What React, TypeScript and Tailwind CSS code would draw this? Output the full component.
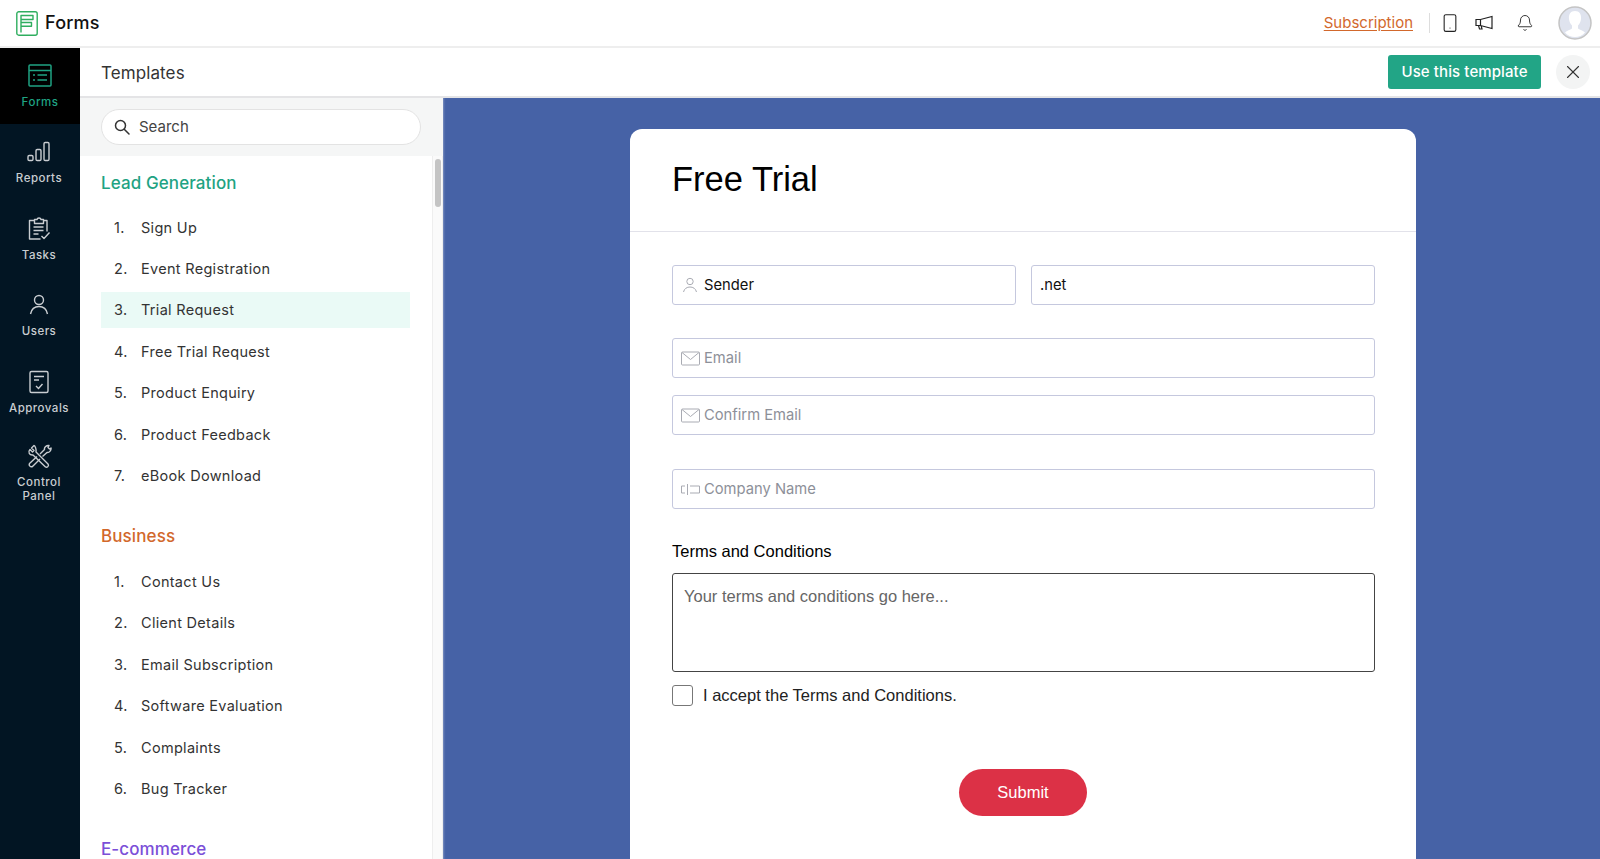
import { X, Smartphone, Bell } from "lucide-react";
import type { ReactNode } from "react";

const sansFont = "font-['Inter','Noto_Sans',sans-serif]";

const FormsIcon = () => (
  <svg width="26" height="26" viewBox="0 0 26 26" fill="none" stroke="currentColor" strokeWidth="1.5">
    <rect x="2" y="2" width="22" height="21" rx="1" />
    <path d="M2 7.500h22M6 12h2M10.500 12H20M6 17h2M10.500 17H20" />
  </svg>
);

const ReportsIcon = () => (
  <svg width="26" height="26" viewBox="0 0 26 26" fill="none" stroke="currentColor" strokeWidth="1.4">
    <rect x="2" y="16.500" width="5" height="5" rx="1.200" />
    <rect x="10" y="10.500" width="5" height="11" rx="1.200" />
    <rect x="18" y="3.500" width="5" height="18" rx="1.200" />
  </svg>
);

const TasksIcon = () => (
  <svg width="26" height="26" viewBox="0 0 26 26" fill="none" stroke="currentColor" strokeWidth="1.4" strokeLinejoin="round">
    <path d="M8.500 4.500H3.500v18.500h11M17.500 4.500h3.500v11" />
    <path d="M8.500 3.500h2.500c.4-2 3.600-2 4 0h2.500v4h-9zM7.500 11h10M7.500 14.500h10M7.500 18h5M15.500 20l2.500 2.500 5.500-6" />
  </svg>
);

const UsersIcon = () => (
  <svg width="26" height="26" viewBox="0 0 26 26" fill="none" stroke="currentColor" strokeWidth="1.4">
    <circle cx="13" cy="8" r="4.500" />
    <path d="M4.500 22c1-5 4.500-7.500 8.500-7.500s7.500 2.500 8.500 7.500" />
  </svg>
);

const ApprovalsIcon = () => (
  <svg width="26" height="26" viewBox="0 0 26 26" fill="none" stroke="currentColor" strokeWidth="1.4">
    <rect x="4" y="2.500" width="18" height="21" rx="1.500" />
    <path d="M8 7.500h10M8 11h5M10 17l2.500 2.500 4-4.500" />
  </svg>
);

const ControlIcon = () => (
  <svg width="26" height="26" viewBox="0 0 26 26" fill="none" stroke="currentColor" strokeWidth="1.4" strokeLinejoin="round">
    <path d="M8 2.500L5.500 5l2.500 2.500-1.500 1.500L4 6.500c-2.500 2.500-.5 6 3 5.500l12.500 12c1.500 1 4-1 2.500-3L10 9c.5-3-1-6.500-2-6.500z" />
    <path d="M11 13.500L3.500 20.500c-1 2 1 4 3 3L14 16M14 11l4.500-4.500c-.5-2 2-4.500 4.500-4l-1 2 1.500 1.500 1.500-1c.5 2.500-2 5-4 4.500L16.500 13.500" />
  </svg>
);

const SearchIcon = () => (
  <svg width="16" height="16" viewBox="0 0 16 16" fill="none" stroke="#333" strokeWidth="1.500" strokeLinecap="round">
    <circle cx="6.500" cy="6.500" r="5" />
    <path d="M10.500 10.500l4.500 4.500" />
  </svg>
);

const MailIcon = () => (
  <svg width="19" height="15" viewBox="0 0 19 15" fill="none" stroke="#a9abb3" strokeWidth="1">
    <rect x="0.500" y="1" width="18" height="13" rx="1" />
    <path d="M1 1.500l8.500 7 8.500-7" />
  </svg>
);

const PersonIcon = () => (
  <svg width="16" height="16" viewBox="0 0 16 16" fill="none" stroke="#a9abb3" strokeWidth="1">
    <circle cx="8" cy="4.500" r="3.200" />
    <path d="M1.500 15c.8-3.500 3.500-5 6.500-5s5.700 1.500 6.500 5" />
  </svg>
);

const CompanyIcon = () => (
  <svg width="19" height="11" viewBox="0 0 19 11" fill="none" stroke="#a9abb3" strokeWidth="1">
    <path d="M4 2H.500v7H4M6.500 0v11M9 2h9.500v7H9" />
  </svg>
);

const Megaphone = () => (
  <svg width="18" height="16" viewBox="0 0 18 16" fill="none" stroke="#222" strokeWidth="1.200">
    <path d="M1 4.500h4.500L17 1.500v12l-11.500-3H1zM5.500 4.500v6M3.500 10.500l1 3.500h2.500l-.8-3" />
  </svg>
);

const Logo = () => (
  <svg width="22" height="25" viewBox="0 0 22 25" fill="none" stroke="#2fae5f" strokeWidth="1.400" strokeLinejoin="round">
    <rect x="0.800" y="0.800" width="20.400" height="23.400" rx="2" />
    <path d="M5 21.500V4.500h12v4H5M5 11.500h10.500v3.800H5" />
  </svg>
);

const navItems: { label: ReactNode; icon: ReactNode; height: string; top: string }[] = [
  { label: "Reports", icon: <ReportsIcon />, height: "h-[76.500px]", top: "pt-[15px]" },
  { label: "Tasks", icon: <TasksIcon />, height: "h-[76.500px]", top: "pt-[15px]" },
  { label: "Users", icon: <UsersIcon />, height: "h-[76.500px]", top: "pt-[15px]" },
  { label: "Approvals", icon: <ApprovalsIcon />, height: "h-[76.500px]", top: "pt-[15px]" },
  { label: <>Control<br />Panel</>, icon: <ControlIcon />, height: "h-[90px]", top: "pt-[13px]" },
];

const groups = [
  {
    title: "Lead Generation",
    color: "text-[#1fa383]",
    gap: "mb-[12.500px]",
    items: ["Sign Up", "Event Registration", "Trial Request", "Free Trial Request", "Product Enquiry", "Product Feedback", "eBook Download"],
  },
  {
    title: "Business",
    color: "text-[#d2682c]",
    gap: "mb-[14px]",
    items: ["Contact Us", "Client Details", "Email Subscription", "Software Evaluation", "Complaints", "Bug Tracker"],
  },
  { title: "E-commerce", color: "text-[#7b4fd8]", gap: "mb-0", items: [] },
];

function Field({ icon, text, value }: { icon?: ReactNode; text: string; value?: boolean }) {
  return (
    <div className="flex h-10 items-center rounded-[3px] border border-[#c5c8de] bg-white">
      <span className="flex w-[31px] shrink-0 justify-center pl-[3px]">{icon}</span>
      <span className={`text-[14.750px] ${value ? "text-[#111]" : "text-[#8d9099]"}`}>{text}</span>
    </div>
  );
}

export default function App() {
  return (
    <div className={`flex h-[859px] w-[1600px] flex-col overflow-hidden bg-white ${sansFont}`}>
      <header className="flex h-[48px] shrink-0 items-center justify-between border-b-2 border-[#eeeeee] pl-[16px] pr-[8px]">
        <div className="flex items-center gap-[7px]">
          <Logo />
          <span className="text-lg font-medium tracking-[0.2px] text-[#111]">Forms</span>
        </div>
        <div className="flex items-center">
          <a className="text-[15px] text-[#d2682c] underline underline-offset-2">Subscription</a>
          <span className="ml-[16px] h-[20px] w-px bg-[#dddddd]" />
          <Smartphone size={20} strokeWidth={1.300} className="ml-[10px] text-[#222]" />
          <span className="ml-[15px]"><Megaphone /></span>
          <Bell size={18} strokeWidth={1.200} className="ml-[23px] text-[#222]" />
          <svg width="34" height="34" viewBox="0 0 34 34" className="ml-[24px]">
            <circle cx="17" cy="17" r="16" fill="#dfe3ee" stroke="#c4c4c4" strokeWidth="1.500" />
            <path d="M17 5c-4.500 0-6.500 3.500-6 8 .3 3 1.500 5 3 6.500v3c-2 1.500-5 2-7 4 5 6 15 6 20 0-2-2-5-2.500-7-4v-3c1.500-1.500 2.700-3.500 3-6.500.5-4.500-1.500-8-6-8z" fill="#ffffff" />
          </svg>
        </div>
      </header>

      <div className="flex min-h-0 flex-1">
        <nav className="flex w-[80px] shrink-0 flex-col bg-[#021523] text-[#c9cdd1]">
          <div className="flex h-[76px] flex-col items-center bg-black pt-[15px] text-[#1fa383]">
            <FormsIcon />
            <span className="mt-[5px] text-[11.500px] font-medium tracking-[0.5px]">Forms</span>
          </div>
          {navItems.map((item, i) => (
            <div key={i} className={`flex flex-col items-center pr-[2px] ${item.top} ${item.height}`}>
              {item.icon}
              <span className="mt-[6px] text-center text-[11.500px] leading-[14px] font-medium tracking-[0.5px]">{item.label}</span>
            </div>
          ))}
        </nav>

        <div className="flex min-w-0 flex-1 flex-col">
          <div className="flex h-[50px] shrink-0 items-center justify-between border-b-2 border-[#e4e4e6] pl-[21px] pr-[10px]">
            <span className="mt-[3px] text-[17px] tracking-[0.1px] text-[#333]">Templates</span>
            <div className="flex items-center gap-[15px]">
              <button className="h-[34px] w-[153px] rounded-[3px] bg-[#22a586] text-[15px] font-medium tracking-[0.1px] text-white">Use this template</button>
              <span className="flex h-[34px] w-[34px] items-center justify-center rounded-full bg-[#f3f4f4]">
                <X size={22} strokeWidth={1.200} className="text-[#333]" />
              </span>
            </div>
          </div>

          <div className="flex min-h-0 flex-1">
            <aside className="flex w-[363px] shrink-0 flex-col">
              <div className="flex h-[58px] shrink-0 items-center bg-[#f5f6f6] px-[21px]">
                <div className="flex h-[36px] w-[320px] items-center gap-[9px] rounded-full border border-[#e3e3e3] bg-white pl-[12px]">
                  <SearchIcon />
                  <span className="text-[15px] text-[#444]">Search</span>
                </div>
              </div>
              <div className="flex min-h-0 flex-1">
                <div className="w-[352px] overflow-hidden pl-[21px]">
                  {groups.map((group) => (
                    <section key={group.title} className="mb-[15px] pt-[13px]">
                      <h2 className={`text-[17px] leading-[28px] font-medium tracking-[0.1px] ${group.gap} ${group.color}`}>{group.title}</h2>
                      <ol>
                        {group.items.map((name, i) => (
                          <li
                            key={name}
                            className={`mb-[5.400px] flex h-[36px] w-[309px] items-center pl-[13px] text-[14.500px] tracking-[0.3px] text-[#333] ${name === "Trial Request" ? "bg-[#eafaf6]" : ""}`}
                          >
                            <span className="w-[27px]">{i + 1}.</span>
                            {name}
                          </li>
                        ))}
                      </ol>
                    </section>
                  ))}
                </div>
                <div className="w-[11px] border-x border-[#eeeeee] bg-[#fafafa] pt-[3px]">
                  <div className="mx-auto h-[48px] w-[6px] rounded-full bg-[#c4c4c4]" />
                </div>
              </div>
            </aside>

            <main className="min-w-0 flex-1 overflow-hidden bg-[#4662a6] pl-[187px] pt-[31px] shadow-[inset_2px_0_2px_-1px_rgba(255,255,255,0.3)]">
              <div className="h-[760px] w-[786px] rounded-t-[12px] bg-white font-['Liberation_Sans',sans-serif]">
                <div className="flex h-[103px] items-center border-b border-[#e2e2ea] pl-[42px]">
                  <h1 className="text-[34.500px] text-black">Free Trial</h1>
                </div>
                <div className="pl-[42px] pr-[41px] pt-[33px]">
                  <div className={`grid grid-cols-2 gap-[15px] ${sansFont}`}>
                    <Field icon={<PersonIcon />} text="Sender" value />
                    <div className="flex h-10 items-center rounded-[3px] border border-[#c5c8de] pl-[8px] text-[14.750px] text-[#111]">.net</div>
                  </div>
                  <div className={`mt-[33px] flex flex-col gap-[17px] ${sansFont}`}>
                    <Field icon={<MailIcon />} text="Email" />
                    <Field icon={<MailIcon />} text="Confirm Email" />
                  </div>
                  <div className={`mt-[34px] ${sansFont}`}>
                    <Field icon={<CompanyIcon />} text="Company Name" />
                  </div>
                  <label className="mt-[32px] block text-[16.500px] leading-[20px] text-black">Terms and Conditions</label>
                  <div className="mt-[12px] h-[99px] rounded-[3px] border border-[#444] px-[11px] pt-[12px] text-[16.500px] leading-[20px] text-[#666]">
                    Your terms and conditions go here...
                  </div>
                  <div className="mt-[11px] flex items-center gap-[10px]">
                    <span className="h-[21px] w-[21px] rounded-[3px] border border-[#777]" />
                    <span className="text-[16.500px] text-[#222]">I accept the Terms and Conditions.</span>
                  </div>
                  <div className="mt-[61px] flex justify-center pr-[1px]">
                    <button className="h-[47px] w-[128px] rounded-full bg-[#dc3146] text-[16.500px] font-medium text-white">Submit</button>
                  </div>
                </div>
              </div>
            </main>
          </div>
        </div>
      </div>
    </div>
  );
}
